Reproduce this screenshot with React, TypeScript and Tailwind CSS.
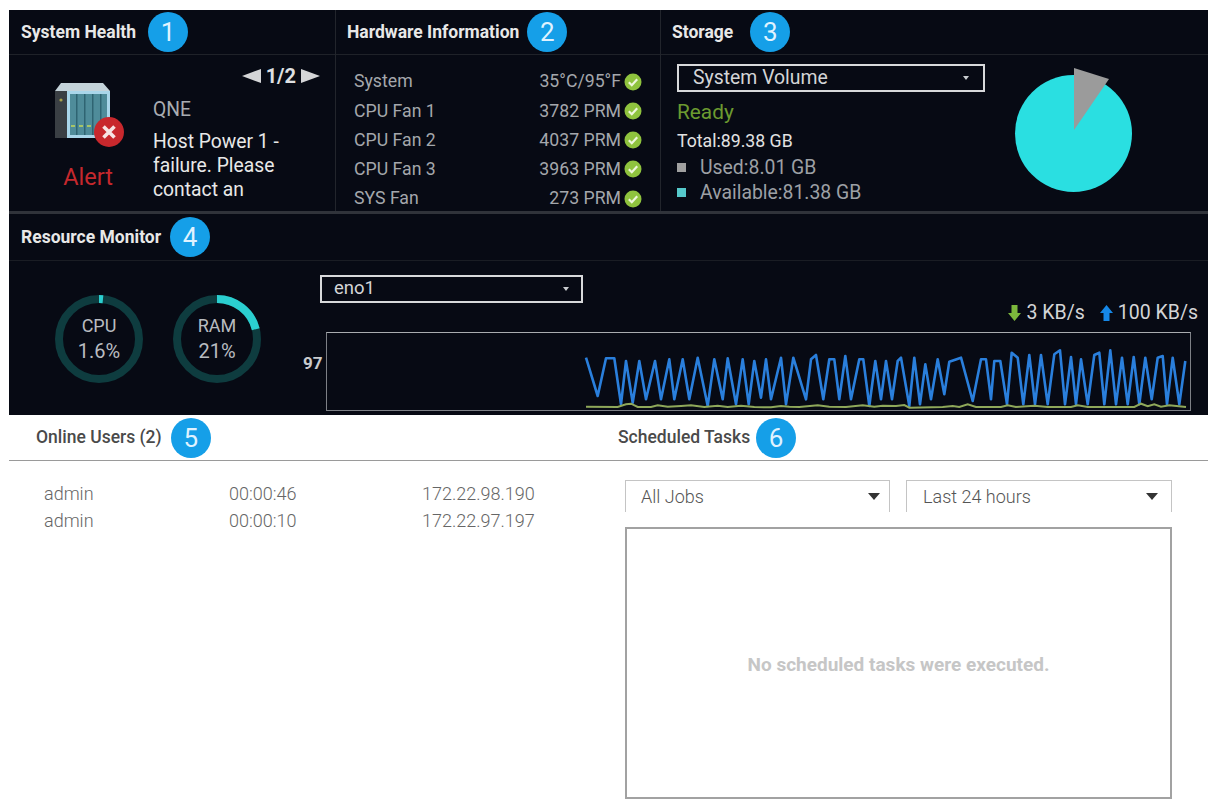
import React from 'react';

const FONT = "font-['Roboto','Liberation_Sans',sans-serif]";

// chart traced from the screenshot: [x, y] in page pixels minus the chart box origin
const trace = (originX: number, pts: number[][]) =>
  pts.map(([x, y]) => [originX + x / 3 - 326, 340 + y / 3 - 332]);

const bluePts = [
  ...trace(580, [
    [15, 50], [50, 165], [75, 52], [100, 52], [120, 190], [135, 60], [155, 185], [175, 60], [195, 175], [222, 60],
    [240, 175], [265, 55], [280, 175], [305, 55], [325, 175], [350, 50], [380, 195], [400, 55], [425, 175], [440, 52],
    [465, 190], [485, 55], [503, 190], [520, 60], [540, 170], [555, 55], [570, 175], [600, 50], [615, 190],
  ]),
  ...trace(785, [
    [22, 50], [60, 175], [75, 55], [90, 42], [112, 175], [130, 55], [145, 55], [160, 175], [178, 45], [195, 175],
    [220, 55], [232, 55], [250, 195], [268, 60], [285, 175], [300, 60], [318, 175], [335, 60], [345, 50], [370, 195],
    [385, 50], [402, 190], [418, 70], [435, 175], [455, 55], [475, 160], [490, 62], [525, 50], [560, 180], [585, 55],
    [600, 55], [615, 175],
  ]),
  ...trace(990, [
    [10, 60], [28, 60], [48, 190], [62, 35], [80, 50], [97, 190], [115, 42], [132, 190], [150, 42], [170, 190],
    [190, 40], [207, 28], [222, 190], [240, 48], [255, 190], [270, 55], [290, 190], [310, 42], [325, 35], [340, 190],
    [358, 28], [375, 190], [393, 50], [410, 190], [428, 48], [445, 190], [463, 50], [482, 175], [500, 50], [515, 45],
    [528, 190], [545, 50], [565, 190], [583, 60],
  ]),
];

const greenPts = [
  ...trace(580, [
    [15, 197], [110, 198], [135, 190], [150, 188], [170, 198], [210, 198], [230, 193], [260, 197], [300, 195], [330, 193],
    [370, 198], [410, 194], [440, 198], [480, 194], [520, 198], [570, 199], [600, 195], [625, 197],
  ]),
  ...trace(785, [
    [40, 198], [95, 193], [130, 197], [180, 198], [230, 193], [265, 197], [290, 194], [330, 195], [355, 192], [370, 200],
    [470, 198], [500, 195], [520, 198], [545, 190], [570, 198], [615, 198],
  ]),
  ...trace(990, [
    [30, 198], [50, 193], [75, 198], [130, 194], [170, 198], [240, 198], [260, 193], [290, 198], [430, 198], [450, 188],
    [470, 196], [490, 190], [510, 197], [535, 193], [585, 198],
  ]),
];

const toLine = (pts: number[][]) => pts.map(([x, y]) => `${x.toFixed(1)},${y.toFixed(1)}`).join(' ');

const hardware = [
  ['System', '35°C/95°F'],
  ['CPU Fan 1', '3782 PRM'],
  ['CPU Fan 2', '4037 PRM'],
  ['CPU Fan 3', '3963 PRM'],
  ['SYS Fan', '273 PRM'],
];

const users = [
  ['admin', '00:00:46', '172.22.98.190'],
  ['admin', '00:00:10', '172.22.97.197'],
];

const Badge = ({ n }: { n: number }) => (
  <span className="flex h-10 w-10 shrink-0 items-center justify-center rounded-full bg-[#159fe8] text-[26px] font-normal leading-none text-[#dff2ff]">
    {n}
  </span>
);

const Caret = ({ size = 'small' }: { size?: 'small' | 'large' }) =>
  size === 'small' ? (
    <svg width="6" height="4" viewBox="0 0 6 4" className="shrink-0">
      <polygon points="0,0 6,0 3,4" fill="#c9ccd0" />
    </svg>
  ) : (
    <svg width="12" height="7" viewBox="0 0 12 7" className="shrink-0">
      <polygon points="0,0 12,0 6,7" fill="#333333" />
    </svg>
  );

const CheckDot = () => (
  <svg width="18" height="18" viewBox="0 0 18 18" className="shrink-0">
    <circle cx="9" cy="9" r="8.5" fill="#8fc33e" />
    <path d="M4.8 9.2 L7.8 12.2 L13.2 6.2" fill="none" stroke="#eef6dc" strokeWidth="2.2" />
  </svg>
);

const NasIcon = () => (
  <svg width="74" height="68" viewBox="53 81 74 68" className="shrink-0">
    <polygon points="55,91 61,83 103,83 110,91" fill="#c4d3da" />
    <rect x="55" y="91" width="12" height="47" fill="#3a3f44" />
    <circle cx="61" cy="100" r="1.6" fill="#a8a04a" />
    <rect x="67" y="91" width="43" height="47" fill="#a9d6ea" />
    <rect x="70" y="94" width="37" height="41" fill="#4f8c9a" />
    <rect x="76" y="94" width="1.5" height="41" fill="#2f6472" />
    <rect x="84" y="94" width="1.5" height="41" fill="#2f6472" />
    <rect x="92" y="94" width="1.5" height="41" fill="#2f6472" />
    <rect x="100" y="94" width="1.5" height="41" fill="#2f6472" />
    <rect x="71" y="125" width="4" height="2" fill="#a7c568" />
    <rect x="79" y="125" width="4" height="2" fill="#a7c568" />
    <rect x="87" y="125" width="4" height="2" fill="#a7c568" />
    <circle cx="109" cy="132" r="15" fill="#c8282d" />
    <path d="M103.5 126.5 L114.5 137.5 M114.5 126.5 L103.5 137.5" stroke="#f6e4e4" strokeWidth="3.6" />
  </svg>
);

const Ring = ({ label, value, percent }: { label: string; value: string; percent: number }) => {
  const r = 40;
  const c = 2 * Math.PI * r;
  return (
    <div className="grid h-[88px] w-[88px] place-items-center">
      <svg width="88" height="88" viewBox="0 0 88 88" className="col-start-1 row-start-1">
        <circle cx="44" cy="44" r={r} fill="none" stroke="#0e3c3f" strokeWidth="8" />
        <circle
          cx="44"
          cy="44"
          r={r}
          fill="none"
          stroke="#2bcfd0"
          strokeWidth="8"
          strokeDasharray={`${(c * percent) / 100} ${c}`}
          transform="rotate(-90 44 44)"
        />
      </svg>
      <div className="col-start-1 row-start-1 flex flex-col items-center text-[#b9bcc0]">
        <span className="text-[18px] leading-[24px]">{label}</span>
        <span className="text-[20px] leading-[26px]">{value}</span>
      </div>
    </div>
  );
};

export default function App() {
  return (
    <div className={`${FONT} h-[801px] w-[1212px] overflow-hidden bg-white pt-[10px]`}>
      <div className="ml-[9px] w-[1199px] bg-[#070a14]">
        <div className="flex h-[204px] border-b-[3px] border-[#30333a]">
          {/* system health */}
          <section className="flex w-[327px] shrink-0 flex-col border-r border-[#22252c]">
            <header className="flex h-[45px] shrink-0 items-center gap-[12px] border-b border-[#1f2229] pl-[12px]">
              <h2 className="text-[17.5px] font-bold text-[#e8e8e8]">System Health</h2>
              <Badge n={1} />
            </header>
            <div className="flex flex-1 pl-[44px]">
              <div className="mt-[26px] flex w-[100px] shrink-0 flex-col">
                <NasIcon />
                <span className="mt-[16px] w-[70px] text-center text-[23.5px] leading-[24px] text-[#c5282d]">Alert</span>
              </div>
              <div className="flex flex-1 flex-col pt-[9px] pr-[15px]">
                <div className="flex items-center justify-end gap-[5px] text-[20px] font-bold leading-[24px] text-[#dfe0e2]">
                  <svg width="19" height="14" viewBox="0 0 19 14">
                    <polygon points="0,7 19,0 19,14" fill="#d5d6d8" />
                  </svg>
                  <span>1/2</span>
                  <svg width="19" height="14" viewBox="0 0 19 14">
                    <polygon points="19,7 0,0 0,14" fill="#d5d6d8" />
                  </svg>
                </div>
                <p className="mt-[10px] text-[19.3px] leading-[24px] text-[#a9acb1]">QNE</p>
                <p className="mt-[8px] text-[19.3px] leading-[24px] text-[#e8e8e8]">
                  Host Power 1 -<br />
                  failure. Please<br />
                  contact an
                </p>
              </div>
            </div>
          </section>

          {/* hardware information */}
          <section className="flex w-[325px] shrink-0 flex-col border-r border-[#22252c]">
            <header className="flex h-[45px] shrink-0 items-center gap-[8px] border-b border-[#1f2229] pl-[11px]">
              <h2 className="text-[17.5px] font-bold text-[#e8e8e8]">Hardware Information</h2>
              <Badge n={2} />
            </header>
            <ul className="flex flex-col pt-[12px] pl-[18px] pr-[18px] text-[17.7px] text-[#a4a7ac]">
              {hardware.map(([name, value]) => (
                <li key={name} className="flex h-[29.25px] items-center justify-between">
                  <span>{name}</span>
                  <span className="flex items-center gap-[3px]">
                    {value}
                    <CheckDot />
                  </span>
                </li>
              ))}
            </ul>
          </section>

          {/* storage */}
          <section className="flex flex-1 flex-col">
            <header className="flex h-[45px] shrink-0 items-center gap-[17px] border-b border-[#1f2229] pl-[11px]">
              <h2 className="text-[17.5px] font-bold text-[#e8e8e8]">Storage</h2>
              <Badge n={3} />
            </header>
            <div className="flex flex-1">
              <div className="w-[325px] shrink-0 pl-[16px] pt-[9px]">
                <div className="flex h-[28px] w-[308px] items-center justify-between border-2 border-[#d8d9db] pl-[14px] pr-[14px] text-[19.4px] text-[#d4d5d7]">
                  <span>System Volume</span>
                  <Caret />
                </div>
                <p className="mt-[7px] text-[20.8px] leading-[26px] text-[#6c9a30]">Ready</p>
                <p className="mt-[3px] text-[17.7px] leading-[26px] text-[#e2e2e2]">Total:89.38 GB</p>
                <div className="mt-[1px] flex items-center gap-[14px] text-[19.4px] leading-[25px] text-[#9da0a5]">
                  <span className="h-[9px] w-[9px] bg-[#a0a0a0]" />
                  <span>Used:8.01 GB</span>
                </div>
                <div className="flex items-center gap-[14px] text-[19.4px] leading-[25px] text-[#9da0a5]">
                  <span className="h-[9px] w-[9px] bg-[#55c9cb]" />
                  <span>Available:81.38 GB</span>
                </div>
              </div>
              <svg width="140" height="140" viewBox="1005 60 140 140" className="mt-[5px] ml-[19px]">
                <circle cx="1073.5" cy="133.5" r="58.5" fill="#2adfe1" />
                <polygon points="1074,130 1074,68 1109,79" fill="#9b9b9b" />
              </svg>
            </div>
          </section>
        </div>

        {/* resource monitor */}
        <section>
          <header className="flex h-[47px] items-center gap-[9px] border-b border-[#1a1d24] pl-[12px]">
            <h2 className="text-[17.5px] font-bold text-[#e8e8e8]">Resource Monitor</h2>
            <Badge n={4} />
          </header>
          <div className="flex h-[154px]">
            <div className="flex w-[294px] shrink-0 gap-[30px] pl-[46px] pt-[34px]">
              <Ring label="CPU" value="1.6%" percent={1.6} />
              <Ring label="RAM" value="21%" percent={21} />
            </div>
            <div className="w-[895px] shrink-0 pt-[14px]">
              <div className="ml-[17px] flex h-[28px] w-[263px] items-center justify-between border-2 border-[#d8d9db] pl-[12px] pr-[12px] text-[18.5px] text-[#d4d5d7]">
                <span>eno1</span>
                <Caret />
              </div>
              <div className="flex h-[20px] items-center justify-end text-[19.5px] text-[#d4d5d7]">
                <svg width="13" height="16" viewBox="0 0 13 16" className="mr-[5px]">
                  <polygon points="3.5,0 9.5,0 9.5,8 13,8 6.5,16 0,8 3.5,8" fill="#7cb83c" />
                </svg>
                <span>3 KB/s</span>
                <svg width="13" height="16" viewBox="0 0 13 16" className="ml-[15px] mr-[5px]">
                  <polygon points="3.5,16 9.5,16 9.5,8 13,8 6.5,0 0,8 3.5,8" fill="#1688e8" />
                </svg>
                <span>100 KB/s</span>
              </div>
              <div className="mt-[9px] flex items-center">
                <span className="w-[23px] shrink-0 pb-[16px] text-[17px] font-bold text-[#c9cbce]">97</span>
                <div className="h-[79px] w-[865px] border border-[#7d8086] border-t-[#a9acb0]">
                  <svg width="863" height="77" viewBox="0 0 863 77" className="block">
                    <polyline points={toLine(bluePts)} fill="none" stroke="#2a7fdc" strokeWidth="2.6" strokeLinejoin="round" />
                    <polyline points={toLine(greenPts)} fill="none" stroke="#8fa85a" strokeWidth="2" />
                  </svg>
                </div>
              </div>
            </div>
          </div>
        </section>
      </div>

      {/* lower half */}
      <div className="ml-[9px] flex h-[46px] w-[1199px] items-center border-b border-[#9a9a9a]">
        <div className="flex w-[582px] shrink-0 items-center gap-[9px] pl-[27px]">
          <h2 className="text-[17.5px] font-medium text-[#4a4a4a]">Online Users (2)</h2>
          <Badge n={5} />
        </div>
        <div className="flex items-center gap-[6px] pl-[27px]">
          <h2 className="text-[17.5px] font-medium text-[#4a4a4a]">Scheduled Tasks</h2>
          <Badge n={6} />
        </div>
      </div>
      <div className="flex">
        <div className="w-[625px] shrink-0 pl-[44px] pt-[19px] text-[18px] font-light text-[#666666]">
          {users.map(([name, time, ip]) => (
            <div key={time} className="flex h-[27px] items-center">
              <span className="w-[185px]">{name}</span>
              <span className="w-[193px]">{time}</span>
              <span>{ip}</span>
            </div>
          ))}
        </div>
        <div className="w-[547px] shrink-0 pt-[19px]">
          <div className="flex gap-[16px]">
            <div className="flex h-[32px] w-[265px] items-center justify-between border border-b-0 border-[#c4c4c4] pl-[15px] pr-[9px] text-[18px] font-light text-[#555555]">
              <span>All Jobs</span>
              <Caret size="large" />
            </div>
            <div className="flex h-[32px] w-[266px] items-center justify-between border border-b-0 border-[#c4c4c4] pl-[16px] pr-[13px] text-[18px] font-light text-[#555555]">
              <span>Last 24 hours</span>
              <Caret size="large" />
            </div>
          </div>
          <div className="mt-[15px] flex h-[272px] w-[547px] items-center justify-center border-2 border-[#a2a2a2] pt-[4px] text-[19px] font-bold text-[#c6c6c6]">
            No scheduled tasks were executed.
          </div>
        </div>
      </div>
    </div>
  );
}
